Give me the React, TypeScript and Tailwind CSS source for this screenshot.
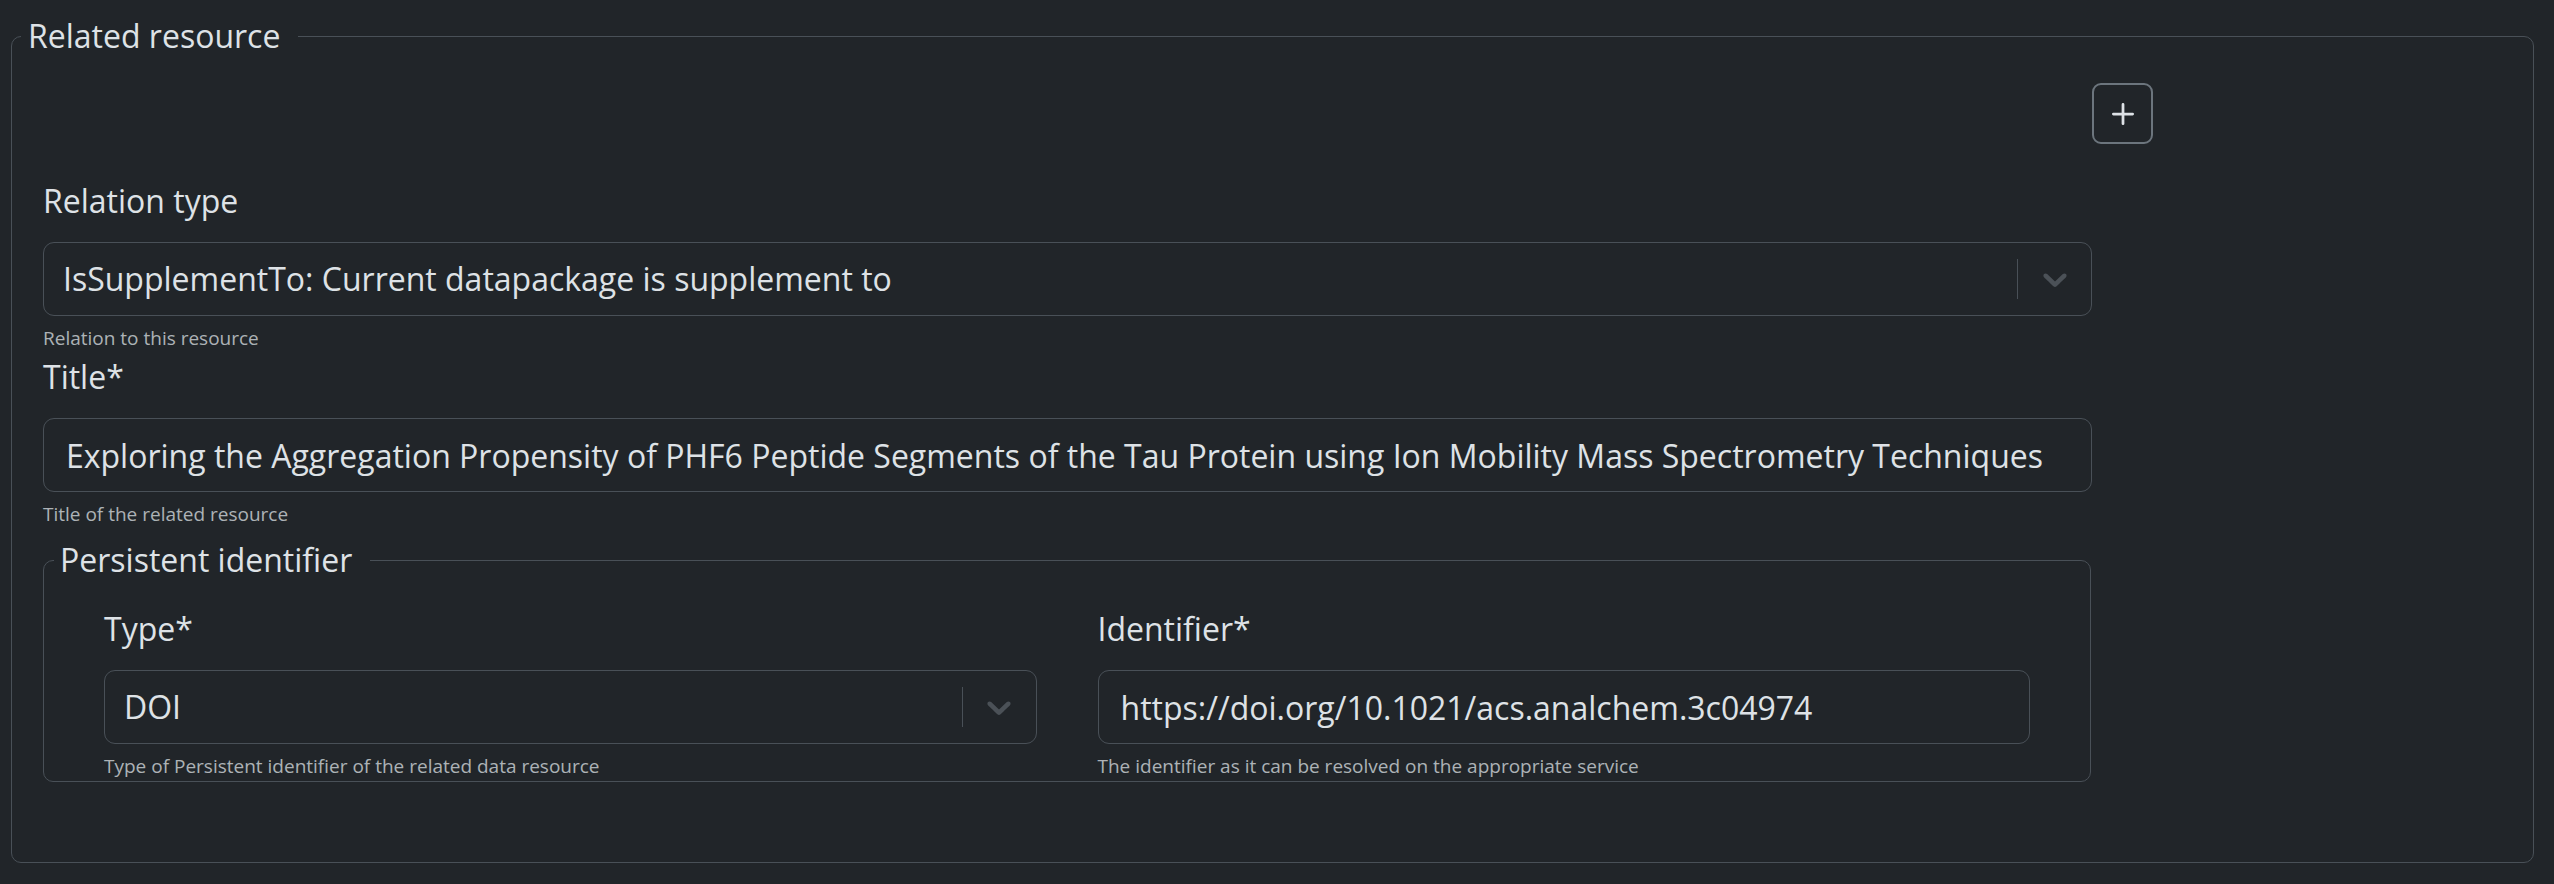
import React from "react";

const Chevron = () => (
  <svg viewBox="0 0 20 20" className="w-[40px] h-[40px]" fill="#4b5157">
    <path d="M4.516 7.548c0.436-0.446 1.043-0.481 1.576 0l3.908 3.747 3.908-3.747c0.533-0.481 1.141-0.446 1.574 0 0.436 0.445 0.408 1.197 0 1.615-0.406 0.418-4.695 4.502-4.695 4.502-0.217 0.223-0.502 0.335-0.787 0.335s-0.57-0.112-0.789-0.335c0 0-4.287-4.084-4.695-4.502s-0.436-1.17 0-1.615z" />
  </svg>
);

const SelectBox = ({ value }: { value: string }) => (
  <div className="flex items-center h-[74px] border border-[#495057] rounded-[11px]">
    <div className="flex-1 pl-[19px] text-[32px] leading-[48px] whitespace-nowrap">{value}</div>
    <div className="w-px h-[40px] bg-[#495057]" />
    <div className="w-[73px] flex justify-center items-center">
      <Chevron />
    </div>
  </div>
);

const TextBox = ({ value }: { value: string }) => (
  <input
    readOnly
    value={value}
    className="block w-full h-[74px] border border-[#495057] rounded-[11px] bg-transparent px-[22px] text-[32px] text-[#dee2e6] outline-none"
  />
);

const Label = ({ children }: { children: React.ReactNode }) => (
  <div className="text-[32px] leading-[48px] mb-[17px]">{children}</div>
);

const Help = ({ children }: { children: React.ReactNode }) => (
  <div className="mt-[7px] text-[19px] leading-[30px] text-[rgba(222,226,230,0.75)] whitespace-nowrap">
    {children}
  </div>
);

export default function App() {
  return (
    <div
      className="min-h-[884px] bg-[#212529] text-[#dee2e6] pt-[12px]"
      style={{ fontFamily: '"Open Sans", "Noto Sans", sans-serif' }}
    >
      <fieldset className="ml-[11px] w-[2523px] border border-[#495057] rounded-[10px] px-[9px] pb-[80px]">
        <legend className="pl-[7px] pr-[18px] text-[32px] leading-[48px]">Related resource</legend>
        <div className="pl-[22px]">
          <div className="flex mt-[23px]">
            <div className="w-[2049px]" />
            <button className="w-[61px] h-[61px] flex items-center justify-center border-2 border-[#6c757d] rounded-[9px]">
              <svg viewBox="0 0 16 16" className="w-[44px] h-[44px]" fill="#dee2e6">
                <path d="M8 4a.5.5 0 0 1 .5.5v3h3a.5.5 0 0 1 0 1h-3v3a.5.5 0 0 1-1 0v-3h-3a.5.5 0 0 1 0-1h3v-3A.5.5 0 0 1 8 4" />
              </svg>
            </button>
          </div>

          <div className="w-[2049px] mt-[33px]">
            <Label>Relation type</Label>
            <SelectBox value="IsSupplementTo: Current datapackage is supplement to" />
            <Help>Relation to this resource</Help>

            <Label>Title*</Label>
            <TextBox value="Exploring the Aggregation Propensity of PHF6 Peptide Segments of the Tau Protein using Ion Mobility Mass Spectrometry Techniques" />
            <Help>Title of the related resource</Help>

            <fieldset className="mt-[7px] w-[2048px] border border-[#495057] rounded-[10px] px-[10px]">
              <legend className="pl-[6px] pr-[18px] text-[32px] leading-[48px]">Persistent identifier</legend>
              <div className="grid grid-cols-2 gap-x-[61px] px-[50px] mt-[21px]">
                <div>
                  <Label>Type*</Label>
                  <SelectBox value="DOI" />
                  <Help>Type of Persistent identifier of the related data resource</Help>
                </div>
                <div>
                  <Label>Identifier*</Label>
                  <TextBox value="https://doi.org/10.1021/acs.analchem.3c04974" />
                  <Help>The identifier as it can be resolved on the appropriate service</Help>
                </div>
              </div>
            </fieldset>
          </div>
        </div>
      </fieldset>
    </div>
  );
}
